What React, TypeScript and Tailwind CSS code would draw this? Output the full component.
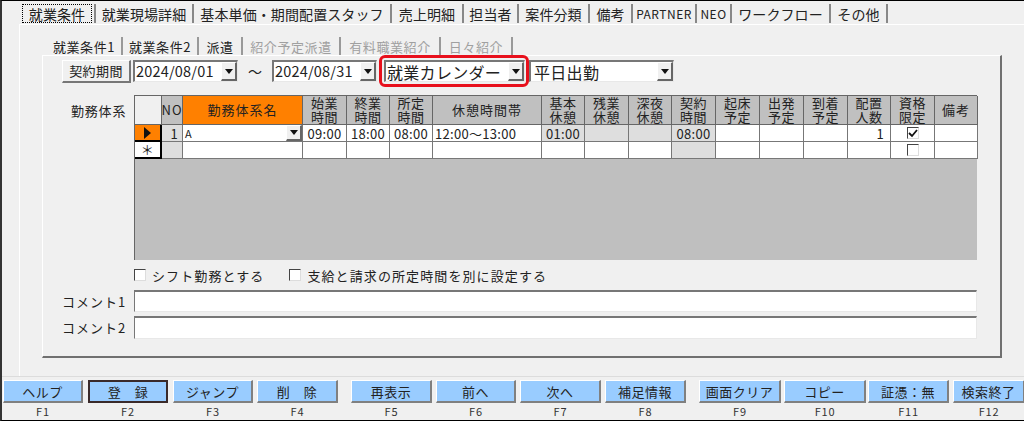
import React from 'react';

const mainTabs = [
  { label: '就業条件', w: 'w-[74px]', active: true },
  { label: '就業現場詳細', w: 'w-[98px]' },
  { label: '基本単価・期間配置スタッフ', w: 'w-[198px]' },
  { label: '売上明細', w: 'w-[72px]' },
  { label: '担当者', w: 'w-[55px]' },
  { label: '案件分類', w: 'w-[71px]' },
  { label: '備考', w: 'w-[43px]' },
  { label: 'PARTNER', w: 'w-[64px]' },
  { label: 'NEO', w: 'w-[35px]' },
  { label: 'ワークフロー', w: 'w-[99px]' },
  { label: 'その他', w: 'w-[57px]' },
];

const subTabs = [
  { label: '就業条件1', w: 'w-[71px] pr-[5px]', active: true },
  { label: '就業条件2', w: 'w-[76px]' },
  { label: '派遣', w: 'w-[44px]' },
  { label: '紹介予定派遣', w: 'w-[98px]', disabled: true },
  { label: '有料職業紹介', w: 'w-[100px]', disabled: true },
  { label: '日々紹介', w: 'w-[72px]', disabled: true },
];

const headers = [
  '', 'NO', '勤務体系名', '始業\n時間', '終業\n時間', '所定\n時間', '休憩時間帯',
  '基本\n休憩', '残業\n休憩', '深夜\n休憩', '契約\n時間', '起床\n予定', '出発\n予定',
  '到着\n予定', '配置\n人数', '資格\n限定', '備考',
];

const gridCols = 'grid grid-cols-[27px_21px_120px_44px_43px_43px_109px_43px_44px_43px_44px_44px_44px_44px_43px_44px_43px]';

const fnButtons = [
  { label: 'ヘルプ', key: 'F1', cls: 'w-[80px]' },
  { label: '登　録', key: 'F2', cls: 'w-[80px] ml-[5px]', focus: true },
  { label: 'ジャンプ', key: 'F3', cls: 'w-[80px] ml-[5px]' },
  { label: '削　除', key: 'F4', cls: 'w-[81px] ml-[4px]' },
  { label: '再表示', key: 'F5', cls: 'w-[81px] ml-[13px]' },
  { label: '前へ', key: 'F6', cls: 'w-[80px] ml-[4px]' },
  { label: '次へ', key: 'F7', cls: 'w-[81px] ml-[4px]' },
  { label: '補足情報', key: 'F8', cls: 'w-[81px] ml-[4px]' },
  { label: '画面クリア', key: 'F9', cls: 'w-[82px] ml-[13px]' },
  { label: 'コピー', key: 'F10', cls: 'w-[82px] ml-[3px]' },
  { label: '証憑：無', key: 'F11', cls: 'w-[81px] ml-[2px]' },
  { label: '検索終了', key: 'F12', cls: 'w-[72px] ml-[4px]' },
];

function DropButton({ className = 'w-[16px]' }: { className?: string }) {
  return (
    <div className={`${className} h-full shrink-0 bg-[#f0f0f0] border-r-2 border-b-2 border-[#666] border-t border-l border-t-white border-l-white flex items-center justify-center`}>
      <svg width="8" height="5" viewBox="0 0 8 5"><path d="M0 0h8L4 5z" fill="#111" /></svg>
    </div>
  );
}

function Combo({ value, className, textClass }: { value: string; className: string; textClass: string }) {
  return (
    <div className={`${className} h-[22px] shrink-0 bg-white border-t-2 border-l-2 border-[#777] border-r border-b border-r-[#e8e8e8] border-b-[#e8e8e8] flex items-center`}>
      <span className={`flex-1 pl-[1px] whitespace-nowrap text-[#222] ${textClass}`}>{value}</span>
      <DropButton />
    </div>
  );
}

function CheckBox({ checked }: { checked?: boolean }) {
  return (
    <div className="w-[12px] h-[12px] shrink-0 bg-white border-t border-l border-[#444] border-r border-b border-r-[#ddd] border-b-[#ddd] flex items-center justify-center">
      {checked && (
        <svg width="10" height="9" viewBox="0 0 10 9"><path d="M1 4l3 3 5-6" fill="none" stroke="#111" strokeWidth="1.8" /></svg>
      )}
    </div>
  );
}

function Cell({
  children,
  bg = 'bg-white',
  align = 'justify-center',
  border = 'border-r border-b border-[#777]',
}: {
  children?: React.ReactNode;
  bg?: string;
  align?: string;
  border?: string;
}) {
  return (
    <div className={`h-[17px] flex items-center text-[13px] tracking-[0.3px] text-[#222] leading-none whitespace-nowrap ${bg} ${align} ${border}`}>
      {children}
    </div>
  );
}

const grayCell = 'bg-[#dedede]';
const rowHeadBorder = 'border-r-2 border-b-2 border-black';

export default function App() {
  return (
    <div className="w-[1024px] h-[421px] box-border flex flex-col overflow-hidden bg-[#f0f0f0] border-t border-b border-black border-l-2 border-l-[#333] font-['Noto_Sans_CJK_JP',sans-serif] text-[#222]">
      {/* top tabs */}
      <div className="flex h-[23px] shrink-0 pl-[20px] pt-[3px] text-[14px] leading-none">
        {mainTabs.map((t) => (
          <div key={t.label} className={`${t.w} h-[19px] shrink-0 flex items-center border-r-2 border-[#888] tracking-[0.1px] whitespace-nowrap`}>
            <span className={`flex-1 h-full flex items-center justify-center ${t.active ? 'border border-dotted border-black mr-[2px]' : ''} ${t.label === 'PARTNER' || t.label === 'NEO' ? 'text-[12px] tracking-[0.5px]' : ''}`}>
              {t.label}
            </span>
          </div>
        ))}
      </div>

      {/* tab pane */}
      <div className="flex-1 min-h-0 ml-[17px] border-l border-t border-white pl-[22px] pt-[12px]">
        <div className="flex h-[18px] pl-[10px] text-[13px] leading-none">
          {subTabs.map((t) => (
            <div key={t.label} className={`${t.w} h-[18px] shrink-0 flex items-center justify-center border-r-2 border-[#999] tracking-[0.6px] whitespace-nowrap ${t.disabled ? 'text-[#a0a0a0]' : ''}`}>
              {t.label}
            </div>
          ))}
        </div>

        {/* inner panel */}
        <div className="w-[960px] h-[303px] box-border border-t border-l border-white border-r-2 border-b-2 border-r-[#707070] border-b-[#707070] pl-[19px]">
          {/* contract period row */}
          <div className="flex items-center h-[30px]">
            <button className="w-[69px] h-[23px] shrink-0 bg-[#f0f0f0] border-t border-l border-white border-r-2 border-b-2 border-r-[#777] border-b-[#777] text-[13px] leading-none tracking-[0.4px]">契約期間</button>
            <Combo value="2024/08/01" className="w-[105px] ml-[2px]" textClass="text-[14.5px] tracking-[0.2px] leading-none" />
            <span className="w-[34px] text-center text-[14px]">～</span>
            <Combo value="2024/08/31" className="w-[105px]" textClass="text-[14.5px] tracking-[0.2px] leading-none" />
            <div className="w-[150px] h-[32px] ml-[2px] -my-[4px] shrink-0 box-border border-[3px] border-[#e8101c] rounded-[6px] flex items-center pl-[2px]">
              <Combo value="就業カレンダー" className="w-[141px]" textClass="text-[16px] leading-none tracking-[0.3px]" />
            </div>
            <Combo value="平日出勤" className="w-[145px]" textClass="text-[16px] leading-none tracking-[0.3px] pl-[3px]" />
          </div>

          {/* work pattern grid */}
          <div className="flex mt-[9px]">
            <div className="w-[72px] shrink-0 pt-[9px] pl-[9px] text-[13px] leading-none tracking-[0.8px] whitespace-nowrap">勤務体系</div>
            <div className="w-[843px] h-[165px] shrink-0 bg-[#bfbfbf] border-t border-l border-[#666]">
              <div className={gridCols}>
                {headers.map((h, i) => (
                  <div
                    key={i}
                    className={`h-[29px] flex items-center justify-center text-center border-r border-b border-[#666] text-[13px] leading-[14px] whitespace-pre-line ${h.includes('\n') ? 'tracking-[0.5px]' : 'tracking-[1px]'} ${i === 0 ? 'bg-[#f0f0f0]' : i === 2 ? 'bg-[#ff8000]' : 'bg-[#c0c0c0]'} ${i === 1 ? 'text-[11px]' : ''}`}
                  >
                    {h}
                  </div>
                ))}

                {/* row 1 */}
                <Cell bg="bg-[#ff8000]" border={rowHeadBorder}>
                  <svg width="9" height="12" viewBox="0 0 9 12"><path d="M1 0l7 6-7 6z" fill="#111" /></svg>
                </Cell>
                <Cell bg={grayCell} align="justify-end pr-[4px]">1</Cell>
                <Cell align="justify-between">
                  <span className="pl-[2px] text-[11px]">A</span>
                  <DropButton className="w-[16px]" />
                </Cell>
                <Cell>09:00</Cell>
                <Cell>18:00</Cell>
                <Cell>08:00</Cell>
                <Cell align="justify-start pl-[2px]">12:00～13:00</Cell>
                <Cell bg={grayCell}>01:00</Cell>
                <Cell bg={grayCell} />
                <Cell bg={grayCell} />
                <Cell bg={grayCell}>08:00</Cell>
                <Cell />
                <Cell />
                <Cell />
                <Cell align="justify-end pr-[6px]">1</Cell>
                <Cell><CheckBox checked /></Cell>
                <Cell />

                {/* row 2 */}
                <Cell border={rowHeadBorder}>＊</Cell>
                <Cell bg={grayCell} />
                <Cell />
                <Cell />
                <Cell />
                <Cell />
                <Cell />
                <Cell />
                <Cell />
                <Cell />
                <Cell bg={grayCell} />
                <Cell />
                <Cell />
                <Cell />
                <Cell />
                <Cell><CheckBox /></Cell>
                <Cell />
              </div>
            </div>
          </div>

          {/* checkboxes */}
          <div className="flex items-center h-[16px] mt-[7px] ml-[72px] text-[13px] leading-none tracking-[1.1px] whitespace-nowrap">
            <CheckBox />
            <span className="ml-[6px]">シフト勤務とする</span>
            <span className="ml-[25px]"><CheckBox /></span>
            <span className="ml-[6px]">支給と請求の所定時間を別に設定する</span>
          </div>

          {/* comments */}
          <div className="flex items-center mt-[7px]">
            <div className="w-[72px] shrink-0 pr-[9px] text-right text-[13px] leading-none tracking-[1px] whitespace-nowrap">コメント1</div>
            <div className="w-[843px] h-[22px] bg-white border-t-2 border-l border-[#777] border-r border-b border-r-[#e8e8e8] border-b-[#e8e8e8]" />
          </div>
          <div className="flex items-center mt-[4px]">
            <div className="w-[72px] shrink-0 pr-[9px] text-right text-[13px] leading-none tracking-[1px] whitespace-nowrap">コメント2</div>
            <div className="w-[843px] h-[23px] bg-white border-t-2 border-l border-[#777] border-r border-b border-r-[#e8e8e8] border-b-[#e8e8e8]" />
          </div>
        </div>
      </div>

      {/* function keys */}
      <div className="h-[44px] shrink-0 border-t border-[#dcdcdc] pt-[3px] pl-[1px] flex">
        {fnButtons.map((b) => (
          <div key={b.key} className={`${b.cls} shrink-0 flex flex-col items-center`}>
            <div className={`w-full h-[23px] flex items-center justify-center bg-[#99ccff] text-[13px] leading-none tracking-[0.5px] whitespace-nowrap ${b.focus ? 'border-2 border-[#3a2a2a]' : 'border-t border-l border-white border-r-2 border-b-2 border-r-[#808080] border-b-[#808080]'}`}>
              {b.label}
            </div>
            <div className="mt-[1px] text-[11px] leading-[14px] tracking-[0.8px] text-[#333]">{b.key}</div>
          </div>
        ))}
      </div>
    </div>
  );
}
